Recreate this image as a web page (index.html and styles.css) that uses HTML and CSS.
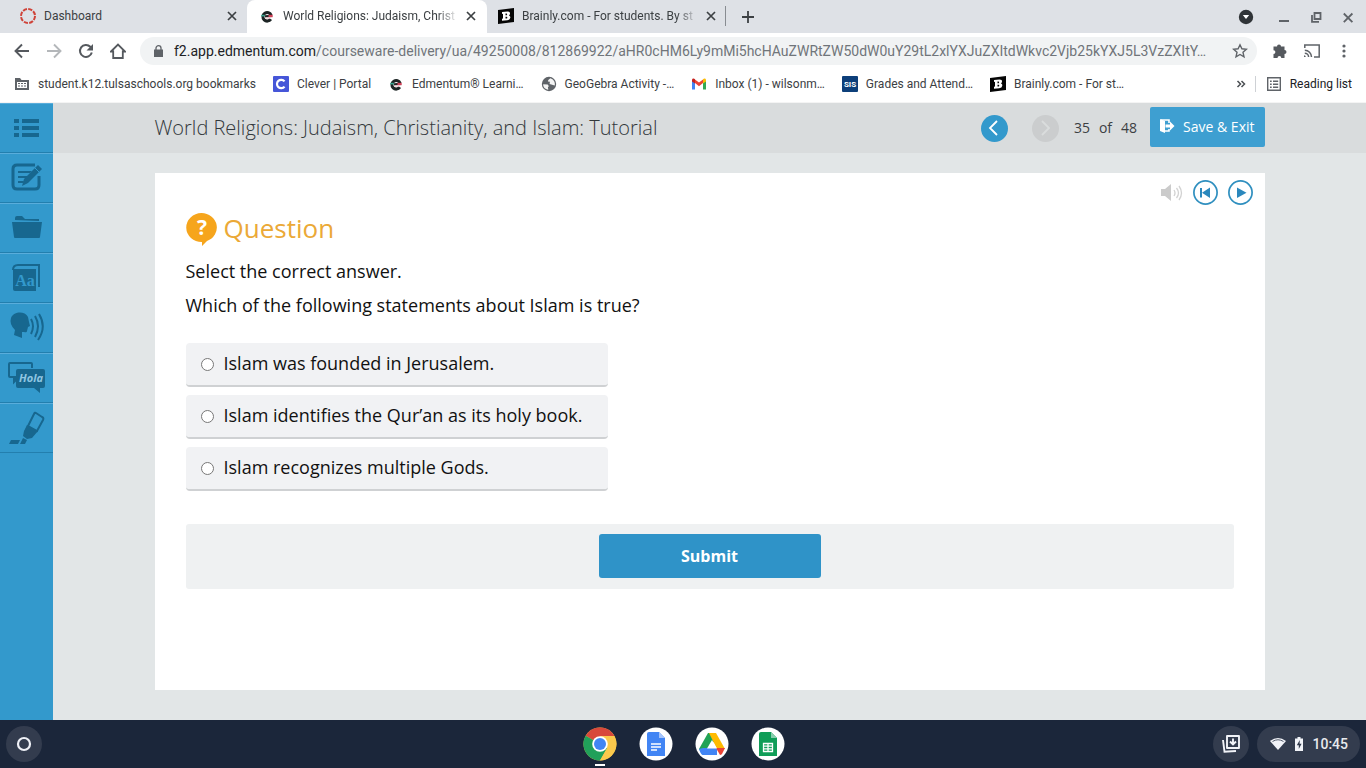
FILE: index.html
```html
<!DOCTYPE html>
<html lang="en">
<head>
<meta charset="utf-8">
<meta name="viewport" content="width=device-width, initial-scale=1">
<title>World Religions: Judaism, Christianity, and Islam</title>
<link rel="stylesheet" href="styles.css">
</head>
<body>
<svg class="defs" aria-hidden="true">
  <symbol id="x" viewBox="0 0 10 10"><path d="M1 1l8 8M9 1L1 9" stroke="currentColor" stroke-width="1.7" fill="none"/></symbol>
  <symbol id="edmentum" viewBox="0 0 16 16"><path d="M11.800 11.200A4.300 4.300 0 1 1 12.200 7.200" fill="none" stroke="#1c2424" stroke-width="3"/><path d="M6 8.400l7-.6" stroke="#222" stroke-width="2.200"/><path d="M9.500 6.800h4.200v2.400H9.500z" fill="#cf4058"/><path d="M2.200 6.800h3.600v1.600H2.200z" fill="#38a892"/><path d="M6.500 10h4.500" stroke="#f0c8d0" stroke-width="1.300"/></symbol>
  <symbol id="brainly" viewBox="0 0 16 16"><path d="M0 2l16-2v14L0 16z" fill="#050505"/><path fill-rule="evenodd" d="M4 4l5.500-.6q2.800 0 2.500 2.200 0 1.200-1 1.900 1.600.5 1.300 2.300-.3 2.300-3 2.500L4 12.800v-2l1-.2V5.800l-1 .1zM7.500 5.500v1.700h1.200q.9-.9 0-1.700zm0 3.200v1.900h1.300q1.100-1 0-1.900z" fill="#fff"/></symbol>
</svg>

<header class="browser">
  <div class="tabs">
    <div class="tab">
      <svg class="i16" viewBox="0 0 16 16"><circle cx="8" cy="8" r="7" fill="none" stroke="#cf4339" stroke-width="2" stroke-dasharray="4.2 1.3"/></svg>
      <span class="tab-title">Dashboard</span>
      <button class="bare" aria-label="Close Dashboard"><svg class="i10"><use href="#x"/></svg></button>
    </div>
    <div class="tab active">
      <svg class="i16"><use href="#edmentum"/></svg>
      <span class="tab-title fade">World Religions: Judaism, Christ</span>
      <button class="bare" aria-label="Close World Religions"><svg class="i10"><use href="#x"/></svg></button>
    </div>
    <div class="tab last">
      <svg class="i16"><use href="#brainly"/></svg>
      <span class="tab-title fade">Brainly.com - For students. By st</span>
      <button class="bare" aria-label="Close Brainly"><svg class="i10"><use href="#x"/></svg></button>
    </div>
    <button class="bare new-tab" aria-label="New tab"><svg class="i12" viewBox="0 0 12 12"><path d="M6 0v12M0 6h12" stroke="#3c4043" stroke-width="1.8"/></svg></button>
    <div class="window">
      <button class="bare" aria-label="Search tabs"><svg class="i16" viewBox="0 0 16 16"><circle cx="8" cy="8" r="7.2" fill="#303438"/><path d="M4.8 6h6.4L8 10z" fill="#fff"/></svg></button>
      <button class="bare" aria-label="Minimize"><svg class="i16" viewBox="0 0 16 16"><path d="M3 12h10" stroke="#5f6368" stroke-width="2"/></svg></button>
      <button class="bare" aria-label="Restore"><svg class="i16" viewBox="0 0 16 16"><path d="M6.5 4h6v6h-6zM4 6v6.8h7" fill="none" stroke="#5f6368" stroke-width="1.8"/></svg></button>
      <button class="bare" aria-label="Close window"><svg class="i16" viewBox="0 0 16 16"><path d="M3.8 4.5l8.6 8.6M12.4 4.5l-8.6 8.6" stroke="#5f6368" stroke-width="1.8"/></svg></button>
    </div>
  </div>

  <div class="toolbar">
    <nav class="nav">
      <button class="bare" aria-label="Back"><svg class="i16" viewBox="0 0 16 16"><path d="M15 8H2M8 1.5L1.5 8 8 14.500" fill="none" stroke="#55595e" stroke-width="1.9"/></svg></button>
      <button class="bare" aria-label="Forward"><svg class="i16" viewBox="0 0 16 16"><path d="M1 8h13M8 1.500L14.500 8 8 14.500" fill="none" stroke="#b4b7ba" stroke-width="1.900"/></svg></button>
      <button class="bare" aria-label="Reload"><svg class="i16" viewBox="0 0 16 16"><path d="M13.800 9.500A6 6 0 1 1 12.300 3.700l1.200 1.200" fill="none" stroke="#55595e" stroke-width="2"/><path d="M15 1v6.500H8.500z" fill="#55595e"/></svg></button>
      <button class="bare" aria-label="Home"><svg class="i16" viewBox="0 0 16 16"><path d="M1 8.500L8 1.500l7 7h-2.200V15H3.200V8.500z" fill="none" stroke="#55595e" stroke-width="1.800"/></svg></button>
    </nav>
    <div class="omnibox">
      <svg class="lock" viewBox="0 0 9 12"><path d="M0 4.500h9V12H0z" fill="#5f6368"/><path d="M2 5V3a2.500 2.300 0 0 1 5 0v2" fill="none" stroke="#5f6368" stroke-width="1.300"/></svg>
      <div class="url"><span class="host">f2.app.edmentum.com</span>/courseware-delivery/ua/49250008/812869922/aHR0cHM6Ly9mMi5hcHAuZWRtZW50dW0uY29tL2xlYXJuZXItdWkvc2Vjb25kYXJ5L3VzZXItY…</div>
      <button class="bare" aria-label="Bookmark"><svg class="i16" viewBox="0 0 16 16"><path d="M8 1.800l1.900 4 4.500.5L11 9.300l1 4.500-4-2.300-4 2.300 1-4.500-3.400-3 4.500-.5z" fill="none" stroke="#5f6368" stroke-width="1.400"/></svg></button>
    </div>
    <div class="actions">
      <button class="bare" aria-label="Extensions"><svg class="i16" viewBox="0 0 16 16"><path d="M1.500 3.500H5a2 2 0 1 1 4 0h3.500V7a2 2 0 1 1 0 4v4H9.300a1.900 1.900 0 0 0-3.800 0h-4v-4a1.900 1.900 0 0 0 0-3.800z" fill="#55595e"/></svg></button>
      <button class="bare" aria-label="Cast"><svg class="i16" viewBox="0 0 16 16"><path d="M.8 5V2h14.400v12H10M.8 7.300A6.700 6.700 0 0 1 7.500 14M.8 10.200A3.800 3.800 0 0 1 4.600 14" fill="none" stroke="#5f6368" stroke-width="1.500"/><path d="M0 12.300A1.800 1.800 0 0 1 1.800 14H0z" fill="#5f6368"/></svg></button>
      <button class="bare" aria-label="Menu"><svg class="i16" viewBox="0 0 16 16"><g fill="#5f6368"><circle cx="8" cy="3" r="1.600"/><circle cx="8" cy="8" r="1.600"/><circle cx="8" cy="13" r="1.600"/></g></svg></button>
    </div>
  </div>

  <nav class="bookmarks" aria-label="Bookmarks">
    <a href="#"><svg class="i16" viewBox="0 0 16 16"><path d="M1 2h5l1.500 2H15v10H1z" fill="#5f6368"/><path d="M3 6h10v6H3z" fill="#fff"/><path d="M4 7h2v1H4zm3 0h2v1H7zm3 0h2v1h-2zM4 9.500h2v1H4zm3 0h2v1H7zm3 0h2v1h-2z" fill="#5f6368"/></svg>student.k12.tulsaschools.org bookmarks</a>
    <a href="#"><svg class="i16" viewBox="0 0 16 16"><rect width="16" height="16" rx="1" fill="#4656d8"/><path d="M11.500 5.400A4.200 4.200 0 1 0 11.500 10.600" fill="none" stroke="#fff" stroke-width="2.200"/></svg>Clever | Portal</a>
    <a href="#"><svg class="i16"><use href="#edmentum"/></svg>Edmentum® Learni…</a>
    <a href="#"><svg class="i16" viewBox="0 0 16 16"><circle cx="8" cy="8" r="7.200" fill="#5f6368"/><path d="M2.200 8.200l4.500.3 1.200 1.800-1 .8.400 2.700C4 13.200 2 11 2.200 8.200zM9.300 2.300l-2 1.600-.4 1.600 2 .3L8.600 8l2.500.8 2.700.6c.6-3.500-1.300-6-4.500-7.100z" fill="#f4f4f4"/></svg>GeoGebra Activity -…</a>
    <a href="#"><svg class="i16" viewBox="0 0 16 16"><path d="M1 4v9.500h3V7z" fill="#4285f4"/><path d="M15 4v9.500h-3V7z" fill="#34a853"/><path d="M4 7V3.500l4 3 4-3V7l-4 3.200z" fill="#ea4335"/><path d="M1 4.300C1 2.500 2.700 2 4 3.300V7.500L1 5.400z" fill="#c5221f"/><path d="M15 4.300c0-1.800-1.700-2.300-3-1V7.500l3-2.100z" fill="#fbbc04"/></svg>Inbox (1) - wilsonm…</a>
    <a href="#"><svg class="i16" viewBox="0 0 16 16"><rect width="16" height="16" rx="1" fill="#0d3f7a"/><text x="8" y="11" text-anchor="middle" font-family="Roboto, sans-serif" font-size="8" font-weight="700" fill="#fff">SIS</text></svg>Grades and Attend…</a>
    <a href="#"><svg class="i16"><use href="#brainly"/></svg>Brainly.com - For st…</a>
    <div class="bookmarks-end">
      <button class="bare" aria-label="More bookmarks"><svg class="i10" viewBox="0 0 10 10"><path d="M1.500 2l3 3-3 3M5.500 2l3 3-3 3" fill="none" stroke="#4c5054" stroke-width="1.500"/></svg></button>
      <button class="bare reading"><svg class="i16" viewBox="0 0 16 16"><path d="M1.700 1.700h12.600v12.600H1.700z" fill="none" stroke="#5f6368" stroke-width="1.400"/><path d="M4 4.400h1.700v1.500H4zm3 0h5.200v1.500H7zm-3 3h1.700v1.500H4zm3 0h5.200v1.500H7zm-3 3h1.700v1.500H4zm3 0h5.200v1.500H7z" fill="#5f6368"/></svg>Reading list</button>
    </div>
  </nav>
</header>

<div class="app">
  <nav class="tools" aria-label="Tools">
    <button aria-label="Contents"><svg viewBox="0 0 40 40"><path d="M8 11h5v4H8zm8 0h17v4H16zM8 18h5v4H8zm8 0h17v4H16zM8 25h5v4H8zm8 0h17v4H16z"/></svg></button>
    <button aria-label="Notes"><svg viewBox="0 0 40 40"><path d="M29 7H11q-4 0-4 4v16q0 4 4 4h18q4 0 4-4v-9" fill="none" stroke="#17678f" stroke-width="3"/><path d="M12 13h14l-2 2H12zm0 5h10l-2 2H12zm0 5h6l-1 2h-5z"/><path d="M32 7l4 4-14 14-6 3 2-7z"/><path d="M29 10l4 4" stroke="#3399cc"/></svg></button>
    <button aria-label="Resources"><svg viewBox="0 0 40 40"><path d="M9 12v-2q0-2 2-2h5l3 3h14v2z"/><path d="M6 14h30l-2 15q0 1-1 1H9q-1 0-1-1z"/></svg></button>
    <button aria-label="Glossary"><svg viewBox="0 0 40 40"><path d="M7 11h23v22H9q-2 0-2-2z"/><path d="M7 12q0-5 5-5h21v22" fill="none" stroke="#17678f" stroke-width="2"/><text x="19" y="28" text-anchor="middle" font-family="Liberation Serif, serif" font-size="16" font-weight="700" fill="#3399cc">Aa</text></svg></button>
    <button aria-label="Read aloud"><svg viewBox="0 0 40 40"><path d="M8 27l1-5q-6-6-4-12c3-7 14-7 17-1l1 5 1 4-2 1-1 4q0 2-3 1h-2v6l-8-3z"/><path d="M26 11q4 7 0 15M30 8q6 10 0 21M34 6q8 13-1 26" transform="translate(-1 0)" fill="none" stroke="#17678f" stroke-width="2"/></svg></button>
    <button aria-label="Translate"><svg viewBox="0 0 40 40"><path d="M9 22v-3H4q-1 0-1-1V6q0-1 1-1h21q1 0 1 1v4M8 20v4l4-4" fill="none" stroke="#17678f" stroke-width="2"/><path d="M12 11h25q2 0 2 2v15q0 2-2 2h-3v5l-6-5H12q-2 0-2-2V13q0-2 2-2z"/><text x="25" y="24" text-anchor="middle" font-family="Open Sans, sans-serif" font-style="italic" font-size="11" font-weight="700" fill="#8fc6e2">Hola</text></svg></button>
    <button aria-label="Highlighter"><svg viewBox="0 0 40 40"><path d="M30 5l6 4q2 1 1 3l-6 11-9-5 6-12q1-2 2-1z" fill="none" stroke="#17678f" stroke-width="2"/><path d="M21 17l11 6-6 7-5 1-4-3 1-5zM17 30l4 2-2 4h-5zM5 32h9l-2 4H3z"/></svg></button>
  </nav>

  <main class="lesson">
    <div class="lesson-bar">
      <div class="wrap bar-row">
        <h1>World Religions: Judaism, Christianity, and Islam: Tutorial</h1>
        <button class="page-btn" aria-label="Previous page"><svg class="i16" viewBox="0 0 16 16"><path d="M11 1L4 8l7 7" fill="none" stroke="#fff" stroke-width="1.800"/></svg></button>
        <button class="page-btn off" aria-label="Next page" disabled><svg class="i16" viewBox="0 0 16 16"><path d="M5 1l7 7-7 7" fill="none" stroke="#dadddd" stroke-width="1.800"/></svg></button>
        <div class="count"><span>35</span><span>of</span><span>48</span></div>
        <button class="save"><svg class="i16" viewBox="0 0 16 16"><path d="M1 1l5 2v12l-5-2z" fill="#fff"/><path d="M2 2h8v3M6 13h4v-2" fill="none" stroke="#fff" stroke-width="1.600"/><path d="M6.500 6.500H11v-3L15.500 8 11 12.500v-3H6.500z" fill="#fff"/></svg>Save &amp; Exit</button>
      </div>
    </div>

    <section class="wrap card">
      <div class="media">
        <button class="bare" aria-label="Audio"><svg class="speaker" viewBox="0 0 22 18"><path d="M0 5h4l6-5v17l-6-5H0z" fill="#cbcbcb"/><path d="M13 6q2 3 0 6M15.500 4q4 5 0 10M18 2q5 7 0 14" fill="none" stroke="#d2d2d2" stroke-width="1.300"/></svg></button>
        <button class="bare" aria-label="Restart"><svg class="i25" viewBox="0 0 25 25"><circle cx="12.500" cy="12.500" r="11.600" fill="#fff" stroke="#2f8fbf" stroke-width="1.700"/><path d="M7 8h2v9.500H7zM17 7.500v10.500l-8-5.200z" fill="#2b88bd"/></svg></button>
        <button class="bare" aria-label="Play"><svg class="i25" viewBox="0 0 25 25"><circle cx="12.500" cy="12.500" r="11.600" fill="#fff" stroke="#2f8fbf" stroke-width="1.700"/><path d="M9 7.500v10.500l9.500-5.200z" fill="#2b88bd"/></svg></button>
      </div>
      <form class="question" onsubmit="return false">
        <h2><svg class="q-icon" viewBox="0 0 31 33"><path d="M15.500 0a15.500 14.500 0 0 1 5.500 28l-5 5v-4A15.500 14.500 0 0 1 15.500 0z" fill="#f6a51c"/><text x="16" y="22" text-anchor="middle" font-family="Open Sans, sans-serif" font-weight="700" font-size="21" fill="#fff">?</text></svg>Question</h2>
        <p>Select the correct answer.</p>
        <p id="prompt">Which of the following statements about Islam is true?</p>
        <div class="options" role="radiogroup" aria-labelledby="prompt">
          <label><input type="radio" name="answer">Islam was founded in Jerusalem.</label>
          <label><input type="radio" name="answer">Islam identifies the Qur’an as its holy book.</label>
          <label><input type="radio" name="answer">Islam recognizes multiple Gods.</label>
        </div>
        <div class="submit-bar"><button class="submit">Submit</button></div>
      </form>
    </section>
  </main>
</div>

<footer class="shelf">
  <button class="round" aria-label="Launcher"><svg class="i16" viewBox="0 0 16 16"><circle cx="8" cy="8" r="6" fill="none" stroke="#eef0f6" stroke-width="2.200"/></svg></button>
  <div class="apps">
    <button class="bare running" aria-label="Chrome"><svg class="i34" viewBox="0 0 34 34"><circle cx="17" cy="17" r="16.500" fill="#fbc94c"/><path d="M17 17L2.700 8.750A16.500 16.500 0 0 1 31.300 8.750z" fill="#d8483b"/><path d="M17 17L2.700 8.750A16.500 16.500 0 0 0 17 33.500l7.300-12.300z" fill="#21a05a"/><path d="M17 9h14.400a16.500 16.500 0 0 1-14.400 24.500l7-12.500z" fill="#fbc94c"/><circle cx="17" cy="17" r="7.800" fill="#fff"/><circle cx="17" cy="17" r="6" fill="#4285f4"/></svg></button>
    <button class="bare" aria-label="Docs"><svg class="i34" viewBox="0 0 34 34"><circle cx="17" cy="17" r="16.500" fill="#fff"/><path d="M10 5h10l6 6v18H8V7q0-2 2-2z" fill="#4285f4"/><path d="M20 5l6 6h-6z" fill="#a7c5fb"/><path d="M12 17h10M12 20h10M12 23h6" stroke="#fff" stroke-width="1.300"/></svg></button>
    <button class="bare" aria-label="Drive"><svg class="i34" viewBox="0 0 34 34"><circle cx="17" cy="17" r="16.500" fill="#fff"/><path d="M13 6h3l4 7L9 28q-1 0-2-1l-3-5z" fill="#21a355"/><path d="M14 6h7l9 16h-8z" fill="#ffba00"/><path d="M8 21h14v7H8q-2 0-4-6z" fill="#4285f4"/><path d="M21 21h9l-3 6q-1 1-2 1z" fill="#ea4335"/><path d="M17 13l5 8.500H12z" fill="#fff"/></svg></button>
    <button class="bare" aria-label="Sheets"><svg class="i34" viewBox="0 0 34 34"><circle cx="17" cy="17" r="16.500" fill="#fff"/><path d="M10 5h10l6 6v18H8V7q0-2 2-2z" fill="#109d58"/><path d="M20 5l6 6h-6z" fill="#87ceac"/><path d="M12.500 16.500h9v8h-9zM17 16.500v8M12.500 19.200h9M12.500 21.900h9" fill="none" stroke="#fff" stroke-width="1.300"/></svg></button>
  </div>
  <div class="tray">
    <button class="round" aria-label="Downloads"><svg class="i20" viewBox="0 0 20 20"><path d="M6 2h12v12H6z" fill="none" stroke="#f1f3f8" stroke-width="1.900" stroke-linejoin="round"/><path d="M12 4.500v5M9 7.500l3 3 3-3" fill="none" stroke="#f1f3f8" stroke-width="1.900"/><path d="M2 6l1.500 11.800L15 17" fill="none" stroke="#f1f3f8" stroke-width="1.900"/></svg></button>
    <button class="status">
      <svg class="i16" viewBox="0 0 16 16"><path d="M0 5q8-6 16 0L8 14z" fill="#f1f3f8"/><path d="M2.500 5.500q5.500-3.500 11 0" fill="none" stroke="#555d6d" stroke-width="1"/></svg>
      <svg class="battery" viewBox="0 0 8 14"><path d="M2.500 0h3v1.500H8V14H0V1.500h2.500z" fill="#f1f3f8"/><path d="M4.800 3L1.800 8.300h2V12l2.800-5.200h-2z" fill="#30394b"/></svg>
      <span>10:45</span>
    </button>
  </div>
</footer>
</body>
</html>
```
FILE: styles.css
```css
* { box-sizing: border-box; }
body { margin: 0; min-height: 100vh; display: flex; flex-direction: column; background: #e2e6e7; color: #3c4043; font-family: Roboto, sans-serif; font-size: 12px; }
svg { display: block; flex: none; }
.defs { display: none; }
.i10 { width: 10px; height: 10px; }
.i12 { width: 12px; height: 12px; }
.i16 { width: 16px; height: 16px; }
.i20 { width: 20px; height: 20px; }
.i25 { width: 25px; height: 25px; }
.i34 { width: 34px; height: 34px; }
button { font: inherit; color: inherit; border: 0; cursor: pointer; }
.bare { display: flex; align-items: center; justify-content: center; padding: 0; background: none; }

/* Browser frame */
.browser { background: #fff; border-bottom: 1px solid #f4f4f4; }
.tabs { display: flex; align-items: center; height: 33px; padding-left: 8px; background: #dee1e6; }
.tab { display: flex; align-items: center; gap: 8px; width: 239px; height: 33px; padding: 0 10px 1px 12px; }
.tab.active { width: 240px; padding-right: 11px; background: #fff; border-radius: 8px 8px 0 0; }
.tab.last { position: relative; padding-left: 11px; }
.tab.last::after { content: ""; position: absolute; right: 0; top: 6px; width: 1px; height: 20px; background: #888c91; }
.tab-title { flex: 1; white-space: nowrap; }
.fade { mask-image: linear-gradient(to right, #000 88%, transparent); }
.new-tab { width: 44px; height: 32px; }
.window { display: flex; gap: 16px; margin-left: auto; padding-right: 10px; }
.window .bare:first-child { margin-right: 6px; }
.toolbar { display: flex; align-items: center; height: 36px; padding: 0 14px; }
.nav, .actions { display: flex; gap: 16px; }
.omnibox { flex: 1; display: flex; align-items: center; min-width: 0; height: 28px; margin: 0 15px 0 14px; padding: 0 9px 0 14px; border-radius: 14px; background: #f1f3f4; }
.lock { width: 9px; height: 12px; margin-right: 11px; }
.url { flex: 1; overflow: hidden; white-space: nowrap; font-size: 14px; color: #70757a; }
.host { color: #202124; }
.bookmarks { display: flex; align-items: center; gap: 17px; height: 33px; padding: 0 14px 4px; overflow: hidden; white-space: nowrap; }
.bookmarks a { display: flex; align-items: center; gap: 8px; color: inherit; text-decoration: none; }
.bookmarks-end { display: flex; align-items: center; gap: 9px; margin-left: auto; }
.reading { gap: 8px; padding-left: 10px; border-left: 1px solid #ced1d5; color: #202124; }

/* Lesson */
.app { flex: 1; display: flex; font-family: "Open Sans", sans-serif; }
.tools { flex: none; width: 53px; background: #3399cc; }
.tools button { display: flex; align-items: center; justify-content: center; width: 100%; height: 50px; padding: 0 1px 0 0; background: none; border-top: 1px solid #59addb; border-bottom: 1px solid #237fae; }
.tools svg { width: 40px; height: 40px; fill: #17678f; }
.lesson { flex: 1; display: flex; flex-direction: column; min-width: 0; }
.wrap { width: 100%; max-width: 1110px; margin: 0 auto; }
.lesson-bar { background: #d9dcdd; }
.bar-row { display: flex; align-items: center; height: 50px; }
h1 { flex: 1; margin: 0; font-size: 20px; font-weight: 300; line-height: 28px; color: #33383b; }
.page-btn { display: flex; align-items: center; justify-content: center; width: 27px; height: 27px; margin-right: 24px; padding: 0; border-radius: 50%; background: #3399cc; }
.page-btn.off { margin-right: 15px; background: #cbcdce; }
.count { display: flex; gap: 9px; margin-right: 13px; padding-bottom: 2px; font-size: 14px; color: #3c4043; }
.save { display: flex; align-items: center; gap: 8px; height: 40px; margin-bottom: 2px; padding: 0 10px 2px 9px; border-radius: 2px; background: #3e9fd1; color: #fff; font-size: 14px; }
.card { flex: 1; margin: 20px auto 30px; padding-top: 7px; background: #fff; }
.media { display: flex; align-items: center; justify-content: flex-end; gap: 10px; padding-right: 12px; }
.speaker { width: 22px; height: 18px; }
.question { padding: 5px 31px 0; color: #111; font-size: 18px; line-height: 24px; }
h2 { display: flex; align-items: center; gap: 7px; margin: 0 0 13px; font-size: 26px; font-weight: 400; line-height: 36px; color: #eba937; }
.q-icon { width: 31px; height: 33px; margin-top: 3px; }
p { margin: 0 0 10px; }
.options { display: flex; flex-direction: column; gap: 8px; width: 422px; max-width: 100%; margin-top: 26px; }
.options label { display: flex; align-items: center; gap: 10px; min-height: 44px; padding: 0 15px 2px; border-radius: 4px; border-bottom: 2px solid #cfd1d3; background: #f1f2f4; }
.options input { width: 13px; height: 13px; margin: 2px 0 0; }
.submit-bar { display: flex; justify-content: center; margin-top: 33px; padding: 10px 10px 11px; border-radius: 3px; background: #eff1f2; }
.submit { width: 222px; height: 44px; border-radius: 3px; background: #2f93c8; color: #fff; font-size: 16px; font-weight: 700; }

/* Shelf */
.shelf { display: grid; grid-template-columns: 1fr auto 1fr; align-items: center; height: 48px; padding: 0 6px; background: #1b263a; }
.round { display: flex; align-items: center; justify-content: center; width: 36px; height: 36px; padding: 0; border-radius: 50%; background: #333c4e; }
.apps { display: flex; gap: 22px; padding-left: 2px; }
.running { position: relative; }
.running::after { content: ""; position: absolute; bottom: -5px; left: 12px; width: 10px; height: 2px; background: #fff; }
.tray { display: flex; justify-content: flex-end; gap: 8px; }
.status { display: flex; align-items: center; gap: 9px; height: 36px; padding: 0 12px 0 13px; border-radius: 18px; background: #333c4e; color: #e8eaed; font-size: 14px; font-weight: 500; }
.battery { width: 8px; height: 14px; }
```
